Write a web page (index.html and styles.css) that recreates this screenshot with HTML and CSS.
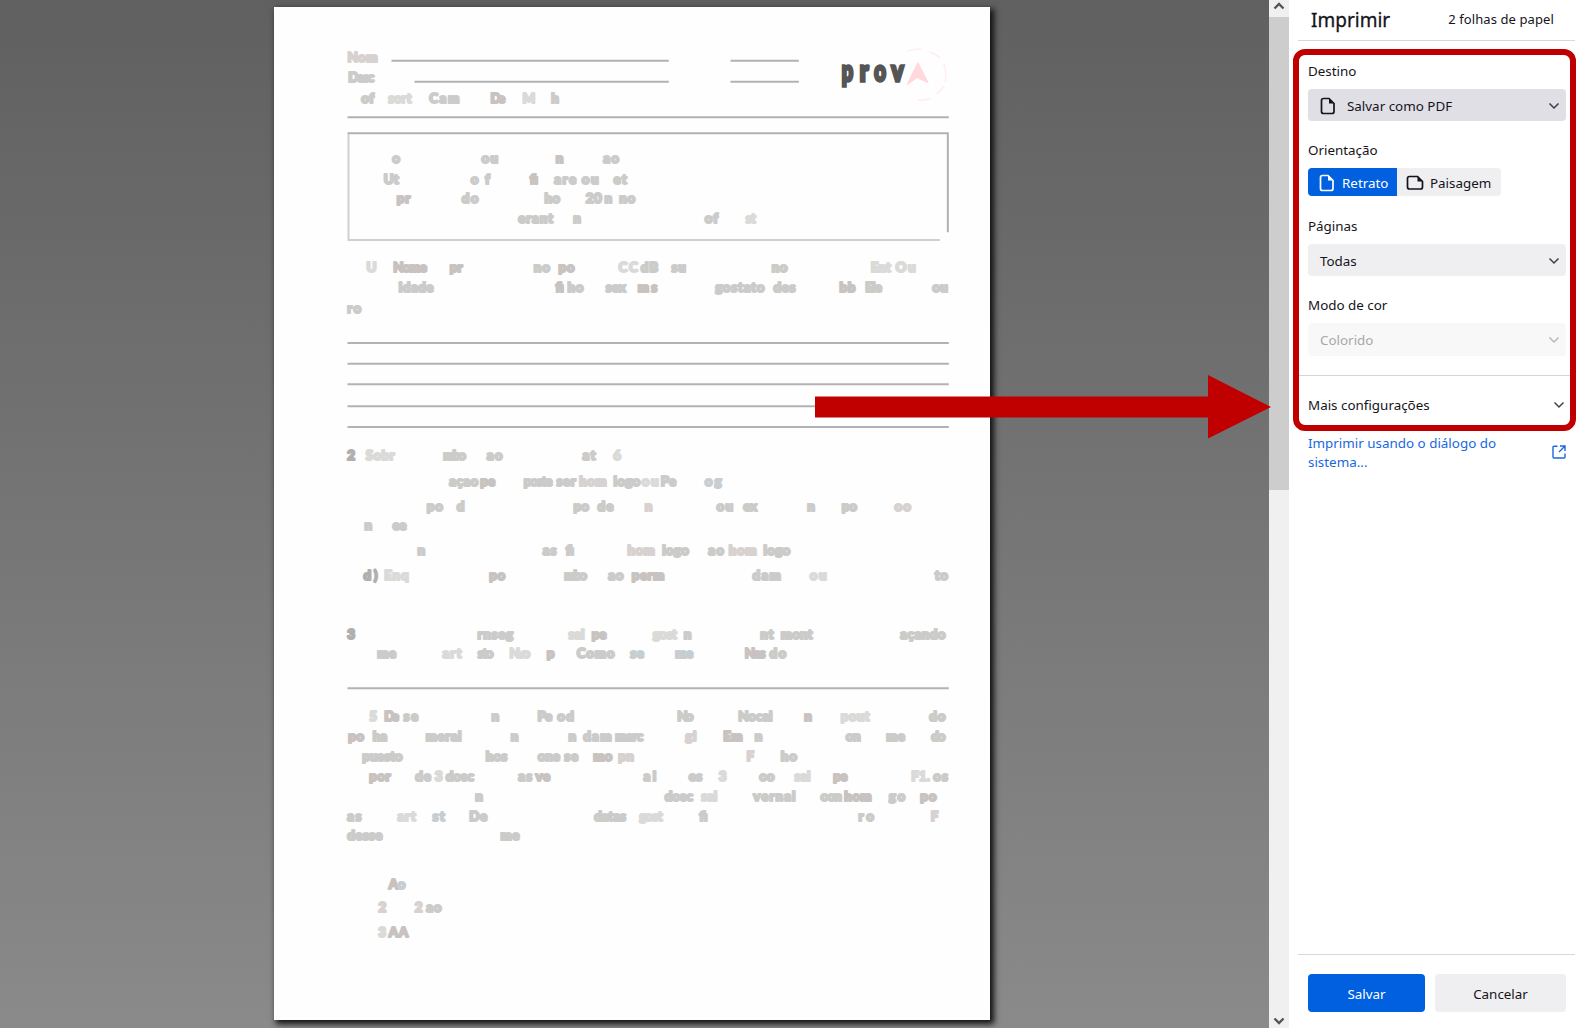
FILE: index.html
```html
<!DOCTYPE html>
<html lang="pt-BR">
<head>
<meta charset="utf-8">
<title>Imprimir</title>
<link rel="stylesheet" href="styles.css">
</head>
<body>
<div class="window">
<main class="preview">
<svg class="sheet" viewBox="823 21 2147 3039" aria-label="Visualização da prova">
  <!-- ruled lines and instruction box -->
  <g class="rules">
    <path d="M1175 182H2007M2192 182H2397M1244 245H2007M2192 245H2397M1043 352H2847"/>
    <path d="M1043 1029H2847M1043 1091H2847M1043 1153H2847M1043 1219H2847M1043 1281H2847M1043 2065H2847"/>
    <path d="M1043 400H2844V697"/>
    <path class="faint" d="M1046 403V720H2820"/>
  </g>
  <!-- school logo -->
  <g transform="translate(1920 90)">
    <g class="logo">
      <text x="606" y="153" textLength="34" lengthAdjust="spacingAndGlyphs">p</text>
      <text x="660" y="153" textLength="26" lengthAdjust="spacingAndGlyphs">r</text>
      <text x="703" y="153" textLength="35" lengthAdjust="spacingAndGlyphs">o</text>
      <text x="755" y="153" textLength="36" lengthAdjust="spacingAndGlyphs">v</text>
    </g>
    <path class="ring" d="M804 64Q820 57 845 57M870 65Q888 72 900 83M912 102Q922 130 916 156M912 168Q904 183 888 192M872 205Q855 212 834 210"/>
    <path class="mark" d="M834 99L864 157L832 142L803 163Z"/>
  </g>

  <g class="ink" transform="translate(990 91)">
    <text y="94"><tspan class="rose" x="53" textLength="90">Nom</tspan></text>
    <text y="156"><tspan x="55" textLength="78">Desc</tspan></text>
    <text y="218"><tspan x="94" textLength="39">of</tspan><tspan class="pale" x="175" textLength="70">sort</tspan><tspan x="298" textLength="90">Cam</tspan><tspan class="warm" x="482" textLength="44">De</tspan><tspan class="pale" x="578" textLength="40">M</tspan><tspan x="664" textLength="24">h</tspan></text>
    <text y="398"><tspan x="187" textLength="30">o</tspan><tspan x="455" textLength="50">ou</tspan><tspan class="warm" x="678" textLength="33">n</tspan><tspan x="820" textLength="47">ao</tspan></text>
    <text y="460"><tspan x="162" textLength="45">Ut</tspan><tspan x="423" textLength="57">of</tspan><tspan class="warm" x="600" textLength="26">fi</tspan><tspan x="673" textLength="66">are</tspan><tspan x="756" textLength="50">ou</tspan><tspan x="851" textLength="40">et</tspan></text>
    <text y="519"><tspan class="warm" x="201" textLength="40">pr</tspan><tspan x="396" textLength="50">do</tspan><tspan x="644" textLength="46">ho</tspan><tspan x="768" textLength="48">20</tspan><tspan x="824" textLength="33">n</tspan><tspan x="868" textLength="48">no</tspan></text>
    <text y="578"><tspan x="565" textLength="105">erant</tspan><tspan x="730" textLength="37">n</tspan><tspan x="1125" textLength="40">of</tspan><tspan class="pale" x="1248" textLength="30">st</tspan></text>
  </g>

  <g class="ink" transform="translate(990 736)">
    <text y="81"><tspan class="pale" x="110" textLength="34">U</tspan><tspan class="warm" x="190" textLength="101">Nome</tspan><tspan class="warm" x="360" textLength="38">pr</tspan><tspan x="612" textLength="48">no</tspan><tspan class="warm" x="686" textLength="48">po</tspan><tspan class="pale" x="866" textLength="58">CC</tspan><tspan x="933" textLength="52">dB</tspan><tspan x="1025" textLength="43">su</tspan><tspan x="1326" textLength="47">no</tspan><tspan class="pale" x="1623" textLength="60">Ent</tspan><tspan class="pale" x="1697" textLength="60">Ou</tspan></text>
    <text y="139"><tspan x="207" textLength="104">idade</tspan><tspan class="warm" x="677" textLength="25">fi</tspan><tspan x="713" textLength="48">ho</tspan><tspan x="828" textLength="60">sex</tspan><tspan class="warm" x="924" textLength="58">ms</tspan><tspan x="1156" textLength="148">gostato</tspan><tspan x="1331" textLength="66">des</tspan><tspan class="warm" x="1529" textLength="48">bb</tspan><tspan x="1606" textLength="50">Ele</tspan><tspan x="1807" textLength="47">ou</tspan></text>
    <text y="203"><tspan x="52" textLength="42">ro</tspan></text>
  </g>

  <g class="ink" transform="translate(990 1322)">
    <text y="58"><tspan class="dark" x="52" textLength="27">2</tspan><tspan class="pale" x="108" textLength="86">Sobr</tspan><tspan x="340" textLength="68">mbo</tspan><tspan x="471" textLength="47">ao</tspan><tspan x="758" textLength="39">at</tspan><tspan class="pale" x="850" textLength="29">6</tspan></text>
    <text y="135"><tspan x="358" textLength="87">açao</tspan><tspan class="warm" x="451" textLength="45">pe</tspan><tspan x="582" textLength="86">poste</tspan><tspan x="680" textLength="58">ser</tspan><tspan class="rose" x="748" textLength="82">hom</tspan><tspan x="851" textLength="80">logo</tspan><tspan class="pale" x="936" textLength="50">ou</tspan><tspan x="993" textLength="46">Pe</tspan><tspan class="cool" x="1125" textLength="50">og</tspan></text>
    <text y="211"><tspan x="291" textLength="48">po</tspan><tspan x="381" textLength="24">d</tspan><tspan x="731" textLength="46">po</tspan><tspan x="803" textLength="48">de</tspan><tspan class="rose" x="945" textLength="33">n</tspan><tspan x="1160" textLength="50">ou</tspan><tspan x="1240" textLength="42">ex</tspan><tspan x="1432" textLength="34">n</tspan><tspan x="1536" textLength="45">po</tspan><tspan class="rose" x="1694" textLength="49">oo</tspan></text>
    <text y="269"><tspan x="104" textLength="33">n</tspan><tspan x="188" textLength="42">ee</tspan></text>
    <text y="342"><tspan x="263" textLength="37">n</tspan><tspan x="639" textLength="41">as</tspan><tspan x="708" textLength="25">fi</tspan><tspan class="rose" x="893" textLength="82">hom</tspan><tspan x="997" textLength="80">logo</tspan><tspan x="1135" textLength="47">ao</tspan><tspan class="rose" x="1197" textLength="83">hom</tspan><tspan x="1301" textLength="80">logo</tspan></text>
    <text y="418"><tspan class="dark" x="101" textLength="42">d)</tspan><tspan class="pale" x="163" textLength="73">Enq</tspan><tspan class="warm" x="478" textLength="48">po</tspan><tspan x="703" textLength="68">mbo</tspan><tspan x="835" textLength="46">ao</tspan><tspan class="warm" x="906" textLength="97">perm</tspan><tspan x="1268" textLength="85">dam</tspan><tspan class="pale" x="1440" textLength="50">ou</tspan><tspan x="1815" textLength="39">to</tspan></text>
    <text y="594"><tspan class="dark" x="52" textLength="27">3</tspan><tspan x="443" textLength="107">rnseg</tspan><tspan class="pale" x="716" textLength="48">sal</tspan><tspan class="warm" x="786" textLength="44">pe</tspan><tspan class="pale" x="969" textLength="72">gost</tspan><tspan x="1062" textLength="38">n</tspan><tspan x="1291" textLength="40">nt</tspan><tspan x="1353" textLength="95">mont</tspan><tspan x="1711" textLength="136">açando</tspan></text>
    <text y="653"><tspan x="142" textLength="57">me</tspan><tspan class="pale" x="338" textLength="57">art</tspan><tspan x="444" textLength="47">sto</tspan><tspan class="pale" x="539" textLength="62">Nvo</tspan><tspan class="warm" x="651" textLength="33">p</tspan><tspan x="741" textLength="113">Como</tspan><tspan class="cool" x="901" textLength="41">se</tspan><tspan class="cool" x="1036" textLength="54">me</tspan><tspan class="warm" x="1245" textLength="62">Nes</tspan><tspan x="1319" textLength="50">do</tspan></text>
  </g>

  <g class="ink" transform="translate(990 2041)">
    <text y="123"><tspan class="pale" x="118" textLength="22">5</tspan><tspan class="warm" x="163" textLength="44">De</tspan><tspan x="221" textLength="44">se</tspan><tspan x="485" textLength="34">n</tspan><tspan x="623" textLength="44">Pe</tspan><tspan x="682" textLength="50">od</tspan><tspan x="1042" textLength="49">No</tspan><tspan x="1225" textLength="103">Nocal</tspan><tspan class="warm" x="1423" textLength="33">n</tspan><tspan class="pale" x="1533" textLength="86">pout</tspan><tspan x="1798" textLength="49">do</tspan></text>
    <text y="182"><tspan class="warm" x="55" textLength="47">po</tspan><tspan x="129" textLength="43">ha</tspan><tspan x="288" textLength="107">meral</tspan><tspan x="543" textLength="37">n</tspan><tspan x="716" textLength="34">n</tspan><tspan x="760" textLength="85">dam</tspan><tspan x="856" textLength="84">marc</tspan><tspan class="rose" x="1066" textLength="34">gl</tspan><tspan class="warm" x="1180" textLength="58">Em</tspan><tspan x="1275" textLength="33">n</tspan><tspan x="1548" textLength="44">on</tspan><tspan x="1669" textLength="56">me</tspan><tspan x="1804" textLength="43">do</tspan></text>
    <text y="241"><tspan x="97" textLength="121">puesto</tspan><tspan x="468" textLength="64">hos</tspan><tspan x="624" textLength="66">one</tspan><tspan x="703" textLength="42">se</tspan><tspan class="warm" x="790" textLength="57">mo</tspan><tspan class="rose" x="865" textLength="47">pn</tspan><tspan class="rose" x="1250" textLength="21">F</tspan><tspan x="1353" textLength="48">ho</tspan></text>
    <text y="303"><tspan class="warm" x="118" textLength="64">por</tspan><tspan x="256" textLength="47">de</tspan><tspan class="pale" x="315" textLength="26">3</tspan><tspan x="348" textLength="84">doec</tspan><tspan x="565" textLength="42">as</tspan><tspan class="warm" x="617" textLength="44">ve</tspan><tspan x="941" textLength="38">al</tspan><tspan x="1077" textLength="40">es</tspan><tspan class="pale" x="1167" textLength="25">3</tspan><tspan x="1288" textLength="46">oo</tspan><tspan class="pale" x="1394" textLength="48">sal</tspan><tspan class="warm" x="1510" textLength="43">pe</tspan><tspan class="pale" x="1744" textLength="56">F1.</tspan><tspan x="1810" textLength="44">os</tspan></text>
    <text y="362"><tspan x="436" textLength="37">n</tspan><tspan x="1005" textLength="84">doec</tspan><tspan class="pale" x="1114" textLength="48">sal</tspan><tspan x="1270" textLength="127">vernal</tspan><tspan x="1472" textLength="64">oon</tspan><tspan class="warm" x="1543" textLength="82">hom</tspan><tspan x="1677" textLength="49">go</tspan><tspan class="warm" x="1771" textLength="49">po</tspan></text>
    <text y="421"><tspan x="52" textLength="43">as</tspan><tspan class="pale" x="203" textLength="55">art</tspan><tspan class="cool" x="308" textLength="37">st</tspan><tspan x="418" textLength="54">De</tspan><tspan x="793" textLength="95">datas</tspan><tspan class="pale" x="928" textLength="70">gost</tspan><tspan x="1108" textLength="25">fi</tspan><tspan x="1586" textLength="46">ro</tspan><tspan class="rose" x="1803" textLength="21">F</tspan></text>
    <text y="479"><tspan x="52" textLength="106">desse</tspan><tspan x="512" textLength="57">me</tspan></text>
    <text y="625"><tspan class="warm" x="177" textLength="33">A</tspan><tspan class="cool" x="204" textLength="27">o</tspan></text>
    <text y="696"><tspan class="rose" x="146" textLength="26">2</tspan><tspan class="rose" x="255" textLength="26">2</tspan><tspan x="289" textLength="46">ao</tspan></text>
    <text y="769"><tspan class="pale" x="145" textLength="24">3</tspan><tspan class="warm" x="177" textLength="58">AA</tspan></text>
  </g>
</svg>
</main>

<div class="scrollbar">
  <svg class="scroll-arrow" viewBox="0 0 20 17"><path d="M5.500 8.500L10 4L14.500 8.500"/></svg>
  <div class="thumb"></div>
  <div class="track"></div>
  <svg class="scroll-arrow" viewBox="0 0 20 17"><path d="M5.500 7.500L10 12L14.500 7.500"/></svg>
</div>

<aside class="panel">
  <header class="head"><h1>Imprimir</h1><span class="count">2 folhas de papel</span></header>
  <div class="settings">
    <div class="label">Destino</div>
    <div class="select strong">
      <svg class="doc" viewBox="0 0 16 18"><path d="M3.500 1.500H9L14 6.500V14.500Q14 16.500 12 16.500H3.500Q1.500 16.500 1.500 14.500V3.500Q1.500 1.500 3.500 1.500Z"/><path class="fold" d="M9 1V6.500H14.500Z"/></svg>
      <span class="value">Salvar como PDF</span>
      <svg class="chevron" viewBox="0 0 12 8"><path d="M1.500 1.500L6 6L10.500 1.500"/></svg>
    </div>
    <div class="label orient">Orientação</div>
    <div class="segments">
      <div class="seg on"><svg class="doc" viewBox="0 0 16 18"><path d="M3.500 1.500H9L14 6.500V14.500Q14 16.500 12 16.500H3.500Q1.500 16.500 1.500 14.500V3.500Q1.500 1.500 3.500 1.500Z"/><path class="fold" d="M9 1V6.500H14.500Z"/></svg><span>Retrato</span></div>
      <div class="seg"><svg class="doc land" viewBox="0 0 18 16"><path d="M3.500 1.500H11.500L16.500 6.500V12Q16.500 14 14.500 14H3.500Q1.500 14 1.500 12V3.500Q1.500 1.500 3.500 1.500Z"/><path class="fold" d="M11.500 1V6.500H17Z"/></svg><span>Paisagem</span></div>
    </div>
    <div class="label pages">Páginas</div>
    <div class="select"><span class="value">Todas</span><svg class="chevron" viewBox="0 0 12 8"><path d="M1.500 1.500L6 6L10.500 1.500"/></svg></div>
    <div class="label mode">Modo de cor</div>
    <div class="select disabled"><span class="value">Colorido</span><svg class="chevron" viewBox="0 0 12 8"><path d="M1.500 1.500L6 6L10.500 1.500"/></svg></div>
  </div>
  <div class="more"><span>Mais configurações</span><svg class="chevron" viewBox="0 0 12 8"><path d="M1.500 1.500L6 6L10.500 1.500"/></svg></div>
  <div class="system"><a>Imprimir usando o diálogo do<br>sistema...</a><svg class="external" viewBox="0 0 14 14"><path d="M5.500 1.200H2Q1 1.200 1 2.200V12Q1 13 2 13H12Q13 13 13 12V8.500M8 1H13V6M13 1L7 7"/></svg></div>
  <footer class="foot"><button class="btn primary">Salvar</button><button class="btn">Cancelar</button></footer>
</aside>

<div class="highlight"></div>
<svg class="arrow" viewBox="0 0 457 64"><path d="M0 21.500H393V0L456 32L393 63.500V42.500H0Z"/></svg>
</div>
</body>
</html>
```
FILE: styles.css
```css
* { box-sizing: border-box; }
body { margin: 0; font-family: "Noto Sans", sans-serif; font-size: 13.4px; color: #15141a; }
.window { position: relative; display: flex; width: 1581px; height: 1028px; overflow: hidden; background: #fff; }

.preview { width: 1269px; padding: 7px 0 0 274px; background: linear-gradient(#606060, #8a8a8a); }
.sheet { display: block; width: 716px; height: 1013px; background: #fefefe; box-shadow: 3px 3px 6px 1px #111; }
.rules path { fill: none; stroke: #b2b2b2; stroke-width: 6; }
.rules .faint { stroke: #cfcfcf; }
.logo { font: 900 88px "Lato", sans-serif; fill: #555; stroke: #555; stroke-width: 10; }
.ring { fill: none; stroke: #ffefef; stroke-width: 5; }
.mark { fill: #ffd9dc; stroke: #ffd9dc; stroke-width: 4; stroke-linejoin: round; }
.ink { font: 900 40px "Lato", sans-serif; fill: #cbcbca; stroke: #cbcbca; stroke-width: 6.5; stroke-linejoin: round; }
.ink .pale { fill: #dadad8; stroke: #dadad8; }
.ink .warm { fill: #c8c3c0; stroke: #c8c3c0; }
.ink .rose { fill: #d7d1d0; stroke: #d7d1d0; }
.ink .cool { fill: #c8cdd1; stroke: #c8cdd1; }
.ink .dark { fill: #b0b0b0; stroke: #b0b0b0; }

.scrollbar { display: flex; flex-direction: column; width: 20px; background: #f0f0f0; }
.scroll-arrow { width: 20px; height: 17px; flex: none; fill: none; stroke: #555; stroke-width: 2.4; }
.thumb { height: 473px; background: #cdcdcd; }
.track { flex: 1; }

.panel { display: flex; flex-direction: column; width: 292px; padding: 0 6px 0 9px; background: #fff; }
.head { display: flex; justify-content: space-between; height: 41px; padding: 0 21px 0 13px; border-bottom: 1px solid #d8d8dc; }
h1 { margin: 0; font-size: 19px; font-weight: 400; line-height: 40px; -webkit-text-stroke: .3px; }
.count { font-size: 13px; line-height: 38px; letter-spacing: .1px; }
.settings { height: 335px; padding: 20px 9px 0 10px; border-bottom: 1px solid #d4d4d8; }
.label { height: 20px; line-height: 20px; }
.orient { margin-top: 19px; }
.pages { margin-top: 20px; }
.mode { margin-top: 19px; }
.select { display: flex; align-items: center; height: 32px; margin-top: 8px; padding: 1px 6px 0 12px; border-radius: 4px; background: #efeff1; }
.select.strong { background: #e0dfe6; }
.disabled { height: 33px; color: #a8a8aa; background: #f8f8f8; }
.value { flex: 1; }
.doc { width: 16px; height: 18px; margin-right: 11px; fill: none; stroke: currentColor; stroke-width: 1.7; }
.doc .fold { fill: currentColor; stroke: none; }
.land { width: 18px; height: 16px; margin-right: 6px; }
.chevron { width: 12px; height: 8px; fill: none; stroke: currentColor; stroke-width: 1.5; opacity: .8; }
.segments { display: flex; height: 28px; margin-top: 8px; }
.seg { display: flex; align-items: center; width: 104px; padding: 1px 0 0 9px; border-radius: 0 4px 4px 0; background: #efeff1; }
.seg.on { width: 89px; padding-left: 11px; border-radius: 4px 0 0 4px; color: #fff; background: #0060df; }
.seg.on .doc { margin-right: 7px; }
.more { display: flex; align-items: center; justify-content: space-between; height: 58px; padding: 0 10px; }
.system { display: flex; justify-content: space-between; padding: 0 9px 0 10px; color: #1a68e0; line-height: 19px; }
.external { width: 14px; height: 14px; margin-top: 11px; fill: none; stroke: currentColor; stroke-width: 1.4; }
.foot { display: flex; gap: 10px; margin-top: auto; height: 74px; padding: 19px 9px 0 10px; border-top: 1px solid #d8d8dc; }
.btn { width: 131px; height: 38px; padding: 1px 0 0; border: 0; border-radius: 4px; color: #15141a; background: #efeff1; font: inherit; }
.primary { width: 117px; color: #fff; background: #0060df; }

.highlight { position: absolute; left: 1293px; top: 49px; width: 283px; height: 382px; border: 6px solid #c00000; border-radius: 12px; }
.arrow { position: absolute; left: 814.500px; top: 374.500px; width: 457px; height: 64px; fill: #c00000; }
```
